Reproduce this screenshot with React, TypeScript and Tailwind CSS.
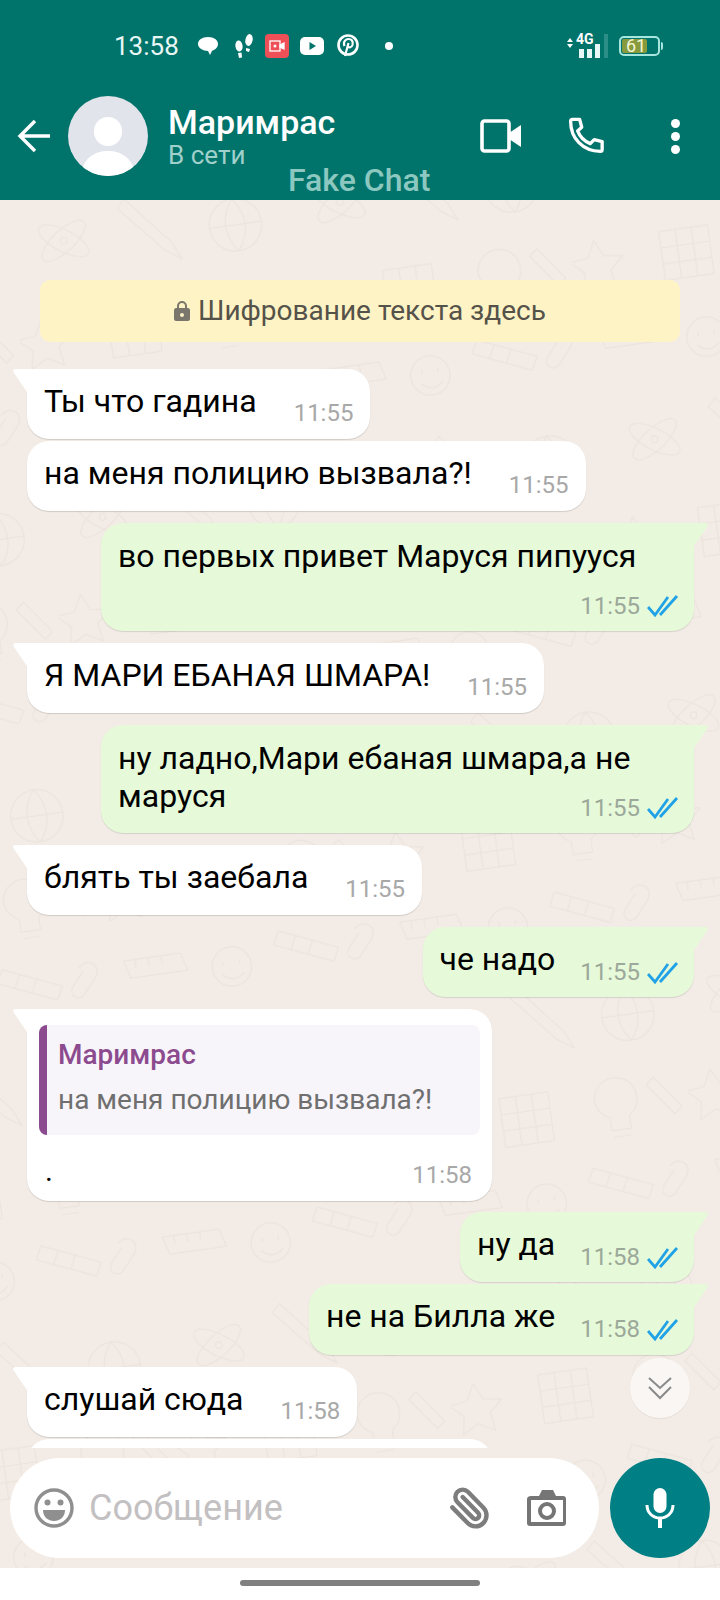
import React from "react";
import { Paperclip } from "lucide-react";

function Doodles() {
  return (
    <svg className="absolute inset-0 w-full h-full" aria-hidden="true">
      <defs>
        <pattern id="dd" x="0" y="0" width="340" height="340" patternUnits="userSpaceOnUse" patternTransform="scale(0.82) rotate(-8)">
          <g fill="none" stroke="#ebe3dc" strokeWidth="1.5" strokeLinecap="round" strokeLinejoin="round">
            <ellipse cx="70" cy="60" rx="34" ry="13" transform="rotate(35 70 60)" />
            <ellipse cx="70" cy="60" rx="34" ry="13" transform="rotate(-35 70 60)" />
            <circle cx="70" cy="60" r="4" />
            <path d="M150 20l50 60 10 22-20-14-50-58z" />
            <circle cx="280" cy="70" r="32" />
            <path d="M248 70h64M280 38c-16 20-16 44 0 64M280 38c16 20 16 44 0 64" />
            <path d="M30 150l10 20 22 3-16 15 4 22-20-11-20 11 4-22-16-15 22-3z" />
            <path d="M110 150h60v60h-60zM130 150v60M150 150v60M110 170h60M110 190h60" />
            <path d="M225 170a26 26 0 1 1 40 22v16h-24v-16a26 26 0 0 1-16-22zM243 216h20" />
            <path d="M300 150l30 40-10 8-30-40z" />
            <path d="M20 260h70l6 22H26zM34 260v10M50 260v10M66 260v10" />
            <circle cx="150" cy="285" r="24" />
            <path d="M140 278v4M160 278v4M138 294c8 8 18 8 26 0" />
            <path d="M212 250l70 30-8 16-70-30zM232 259l-8 16M252 267l-8 16" />
            <path d="M305 260c14-12 30 4 16 18l-14 16c-8 8-20-2-12-12l14-16" />
          </g>
        </pattern>
      </defs>
      <rect width="100%" height="100%" fill="url(#dd)" />
    </svg>
  );
}

function Checks() {
  return (
    <svg width="32" height="26" viewBox="0 0 32 26" fill="none" stroke="#22a2e6" strokeWidth="2.800" className="shrink-0">
      <path d="M1 14l7 8L21 4M13 22L30 3" />
    </svg>
  );
}

function InTail() {
  return (
    <svg width="16" height="26" viewBox="0 0 16 26" className="absolute -left-[14px] top-0">
      <path d="M16 0H3C0 0-.5 2 1 4L16 26z" fill="#fff" />
    </svg>
  );
}

function OutTail() {
  return (
    <svg width="16" height="26" viewBox="0 0 16 26" className="absolute -right-[14px] top-0">
      <path d="M0 0h13c3 0 3.500 2 2 4L0 26z" fill="#e6fad9" />
    </svg>
  );
}

function In({ text, time, tail, cls }: { text: string; time: string; tail?: boolean; cls: string }) {
  return (
    <div className={`relative self-start ml-[27px] h-[70px] flex gap-[37px] bg-white pl-[17px] pr-[17px] pt-[14px] text-[32px] leading-[37px] text-black rounded-[22px] shadow-[0_1px_1px_rgba(0,0,0,0.14)] ${tail ? "rounded-tl-none" : ""} ${cls}`}>
      {tail && <InTail />}
      <span className="whitespace-nowrap">{text}</span>
      <span className="mt-[12px] text-[24px] leading-[37px] text-[#a8a8a8]">{time}</span>
    </div>
  );
}

function Out({ text, time, cls }: { text: string; time: string; cls: string }) {
  return (
    <div className={`relative self-end mr-[26px] h-[70px] flex gap-[25px] bg-[#e6fad9] pl-[17px] pr-[15px] pt-[14px] text-[32px] leading-[37px] text-black rounded-[22px] rounded-tr-none shadow-[0_1px_1px_rgba(0,0,0,0.12)] ${cls}`}>
      <OutTail />
      <span className="whitespace-nowrap">{text}</span>
      <span className="mt-[13px] flex items-center gap-[7px] h-[37px] text-[24px] text-[#9ca89a]">
        {time}
        <Checks />
      </span>
    </div>
  );
}

function OutLong({ text, time, metaCls, cls }: { text: React.ReactNode; time: string; metaCls: string; cls: string }) {
  return (
    <div className={`relative self-end mr-[26px] w-[593px] h-[108px] bg-[#e6fad9] pl-[17px] pr-[15px] pt-[14px] text-[32px] leading-[38px] text-black rounded-[22px] rounded-tr-none shadow-[0_1px_1px_rgba(0,0,0,0.12)] ${cls}`}>
      <OutTail />
      <div>{text}</div>
      <div className={`flex justify-end items-center gap-[7px] h-[28px] text-[24px] text-[#9ca89a] ${metaCls}`}>
        {time}
        <Checks />
      </div>
    </div>
  );
}

function StatusBar() {
  return (
    <div className="h-[92px] flex items-center text-white">
      <span className="ml-[114px] w-[62px] text-[26px] leading-none text-[#e8f6f4]">13:58</span>
      <svg width="22" height="20" viewBox="0 0 22 20" className="ml-[21px]" fill="#fff">
        <path d="M11 1c6 0 10 3 10 7s-4 6-6 7l-2 4-2-4C6 15 1 12 1 8s4-7 10-7z" />
      </svg>
      <svg width="22" height="26" viewBox="0 0 22 26" className="ml-[14px]" fill="#fff">
        <ellipse cx="16" cy="7" rx="3.600" ry="6" transform="rotate(12 16 7)" />
        <path d="M13 15l4 1-1 3-3-1z" />
        <ellipse cx="6" cy="13" rx="3.600" ry="5.500" transform="rotate(-8 6 13)" />
        <path d="M5 20l3.500-.5.500 5-3 .5z" />
      </svg>
      <div className="ml-[10px] w-[24px] h-[24px] rounded-[4px] bg-[#ef5058] flex items-center justify-center">
        <svg width="16" height="12" viewBox="0 0 16 12" fill="none" stroke="#fff" strokeWidth="1.300">
          <rect x="1" y="1" width="10" height="10" />
          <path d="M11 5l4-2v6l-4-2z" fill="#fff" />
          <circle cx="6" cy="6" r="1.500" fill="#fff" stroke="none" />
        </svg>
      </div>
      <svg width="24" height="18" viewBox="0 0 24 18" className="ml-[11px]">
        <rect width="24" height="18" rx="5" fill="#fff" />
        <path d="M9.500 5l6.500 4-6.500 4z" fill="#00736b" />
      </svg>
      <svg width="22" height="24" viewBox="0 0 22 24" className="ml-[13px]" fill="none" stroke="#fff" strokeWidth="2.600">
        <circle cx="11" cy="11" r="9.500" />
        <path d="M8 22l3.500-13M7.500 12c-2-5 2-7 4-7 3 0 5 2 4 6-1 3-4 3-5 1" strokeWidth="2.200" />
      </svg>
      <span className="ml-[26px] w-[8px] h-[8px] rounded-full bg-white" />
      <div className="ml-[174px] -mt-[7px] w-[6px] flex flex-col gap-[2px] items-center">
        <span className="w-0 h-0 border-x-[3px] border-x-transparent border-b-[4px] border-b-white" />
        <span className="w-0 h-0 border-x-[3px] border-x-transparent border-t-[4px] border-t-white" />
      </div>
      <div className="relative ml-[3px] w-[32px] h-[24px]">
        <span className="absolute left-0 -top-[2px] text-[14px] leading-[14px] font-bold text-white">4G</span>
        <span className="absolute left-[3px] bottom-0 w-[5px] h-[9px] bg-[#e6f7f5]" />
        <span className="absolute left-[11px] bottom-0 w-[5px] h-[9px] bg-[#e6f7f5]" />
        <span className="absolute left-[19px] bottom-0 w-[5px] h-[14px] bg-[#e6f7f5]" />
      </div>
      <span className="ml-[-4px] w-[4px] h-[24px] bg-[#2c8f87]" />
      <div className="ml-[11px] relative w-[41px] h-[20px] rounded-[5px] border-2 border-[#a5e6de] p-[1px]">
        <div className="w-[25px] h-full rounded-[2px] bg-[#879a3d]" />
        <span className="absolute left-[5px] -top-[1px] text-[18px] leading-[18px] text-[#f4f6d8]">61</span>
        <span className="absolute -right-[5px] top-[4px] w-[2px] h-[8px] rounded-r bg-[#a5e6de]" />
      </div>
    </div>
  );
}

function Header() {
  return (
    <header className="relative h-[200px] bg-[#00736b] shrink-0">
      <StatusBar />
      <div className="flex items-center h-[88px]">
        <svg width="34" height="34" viewBox="0 0 34 34" fill="none" stroke="#fff" strokeWidth="3.400" className="ml-[17px]">
          <path d="M33 17H3M18 2L3 17l15 15" />
        </svg>
        <div className="relative ml-[17px] w-[80px] h-[80px] rounded-full bg-[#e1e4ea] overflow-hidden">
          <div className="absolute left-[26px] top-[21px] w-[28px] h-[29px] rounded-full bg-white" />
          <div className="absolute left-[13px] top-[55px] w-[54px] h-[50px] rounded-full bg-white" />
        </div>
        <div className="ml-[20px] w-[310px]">
          <div className="text-[34px] leading-[38px] font-medium text-white -mt-[1px]">Маримрас</div>
          <div className="text-[26px] leading-[28px] text-[#a0d0ca]">В сети</div>
        </div>
        <svg width="42" height="34" viewBox="0 0 42 34" className="ml-[2px]" fill="none">
          <rect x="2" y="2" width="27" height="30" rx="2.500" stroke="#fff" strokeWidth="3.600" />
          <path d="M29 14l12-8v22l-12-8z" fill="#fff" />
        </svg>
        <svg width="38" height="38" viewBox="0 0 24 24" className="ml-[45px]" fill="none" stroke="#fff" strokeWidth="2.100" strokeLinejoin="round">
          <path d="M3.500 1.500h4.500l1.300 5-2.600 2.300c1.300 3.300 4.300 6.600 8 8l2.500-2.500 5 1.200v5c0 .8-.5 1.200-1.200 1.200C10 21.500 2.300 13.500 2.300 2.800c0-.8.500-1.300 1.200-1.300z" />
        </svg>
        <div className="ml-[66px] flex flex-col gap-[4px]">
          <span className="w-[9px] h-[9px] rounded-full bg-white" />
          <span className="w-[9px] h-[9px] rounded-full bg-white" />
          <span className="w-[9px] h-[9px] rounded-full bg-white" />
        </div>
      </div>
      <div className="absolute left-[288px] top-[163px] text-[32px] leading-[34px] font-medium text-[#8cc8c0]">Fake Chat</div>
    </header>
  );
}

function Composer() {
  return (
    <div className="relative flex gap-[11px] pl-[10px] h-[100px] mt-[10px]">
      <div className="w-[589px] h-full rounded-full bg-white flex items-center">
        <svg width="40" height="40" viewBox="0 0 40 40" className="ml-[24px]">
          <circle cx="20" cy="20" r="18" fill="none" stroke="#8f8f8f" strokeWidth="3.400" />
          <circle cx="13.500" cy="14.500" r="3" fill="#8f8f8f" />
          <circle cx="26.500" cy="14.500" r="3" fill="#8f8f8f" />
          <path d="M9 22h22c0 7-5 11-11 11S9 29 9 22z" fill="#8f8f8f" />
        </svg>
        <span className="ml-[15px] w-[359px] text-[36px] leading-[40px] text-[#c3c0c2]">Сообщение</span>
        <Paperclip size={44} strokeWidth={2.400} color="#7d7d7d" className="-scale-x-100" />
        <svg width="40" height="38" viewBox="0 0 40 38" className="ml-[35px]">
          <path fillRule="evenodd" d="M4 7h8l3-6h11l3 6h7c2 0 3 1 3 3v24c0 2-1 3-3 3H3c-2 0-3-1-3-3V10c0-2 2-3 4-3zm0 4v22h32V11zm16 2a9 9 0 1 1 0 18 9 9 0 0 1 0-18zm0 4a5 5 0 1 0 0 10 5 5 0 0 0 0-10z" fill="#757575" />
        </svg>
      </div>
      <div className="w-[100px] h-full rounded-full bg-[#007f84] flex items-center justify-center">
        <svg width="30" height="40" viewBox="0 0 30 40" fill="none">
          <rect x="8.500" y="0" width="13" height="25" rx="6.500" fill="#fff" />
          <path d="M2 17c0 8 6 13 13 13s13-5 13-13" stroke="#fff" strokeWidth="3" />
          <path d="M15 30v10" stroke="#fff" strokeWidth="4" />
        </svg>
      </div>
    </div>
  );
}

export default function App() {
  return (
    <div className="relative w-[720px] h-[1600px] overflow-hidden flex flex-col bg-white [font-family:Roboto,sans-serif]">
      <Header />
      <main className="relative h-[1368px] bg-[#f3ece6] shrink-0">
        <Doodles />
        <div className="relative h-[1248px] overflow-hidden flex flex-col">
          <div className="mx-[40px] mt-[80px] h-[62px] shrink-0 rounded-[10px] bg-[#fef3c5] flex items-center justify-center gap-[8px] text-[28px] text-[#55524a]">
            <svg width="16" height="20" viewBox="0 0 16 20" fill="#7a766b">
              <path fillRule="evenodd" d="M3 7V5a5 5 0 0 1 10 0v2h1c1 0 2 1 2 2v9c0 1-1 2-2 2H2c-1 0-2-1-2-2V9c0-1 1-2 2-2zm2 0h6V5a3 3 0 0 0-6 0zm3 5a2 2 0 1 0 0 4 2 2 0 0 0 0-4z" />
            </svg>
            <span>Шифрование текста здесь</span>
          </div>
          <In cls="mt-[27px] shrink-0" tail text="Ты что гадина" time="11:55" />
          <In cls="mt-[2px] shrink-0" text="на меня полицию вызвала?!" time="11:55" />
          <OutLong cls="mt-[12px] shrink-0" metaCls="mt-[17px]" text="во первых привет Маруся пипууся" time="11:55" />
          <In cls="mt-[12px] shrink-0" tail text="Я МАРИ ЕБАНАЯ ШМАРА!" time="11:55" />
          <OutLong cls="mt-[12px] shrink-0" metaCls="-mt-[21px]" text={<>ну ладно,Мари ебаная шмара,а не<br />маруся</>} time="11:55" />
          <In cls="mt-[12px] shrink-0" tail text="блять ты заебала" time="11:55" />
          <Out cls="mt-[12px] shrink-0" text="че надо" time="11:55" />
          <div className="relative self-start ml-[27px] mt-[12px] w-[465px] h-[192px] shrink-0 bg-white rounded-[22px] rounded-tl-none p-[12px] pt-[16px] shadow-[0_1px_1px_rgba(0,0,0,0.14)]">
            <InTail />
            <div className="h-[110px] rounded-[8px] bg-[#f7f5f9] border-l-[8px] border-[#8c4a8f] pl-[11px] pt-[14px]">
              <div className="text-[28px] leading-[32px] font-medium text-[#8c4a8f]">Маримрас</div>
              <div className="mt-[13px] text-[28px] leading-[32px] text-[#6f6f6f]">на меня полицию вызвала?!</div>
            </div>
            <div className="flex justify-between items-center mt-[22px] pl-[6px] pr-[8px] h-[36px]">
              <span className="text-[30px] leading-[30px] text-black -mt-[8px]">.</span>
              <span className="text-[24px] text-[#a8a8a8]">11:58</span>
            </div>
          </div>
          <Out cls="mt-[11px] shrink-0" text="ну да" time="11:58" />
          <Out cls="mt-[2px] !h-[71px] shrink-0" text="не на Билла же" time="11:58" />
          <In cls="mt-[12px] shrink-0" tail text="слушай сюда" time="11:58" />
          <div className="ml-[27px] mt-[2px] w-[465px] h-[70px] shrink-0 bg-white rounded-[22px]" />
        </div>
        <Composer />
        <button className="absolute left-[630px] top-[1158px] w-[60px] h-[60px] rounded-full bg-[#f9f6f3] flex items-center justify-center shadow-[0_1px_1px_rgba(0,0,0,0.06)]">
          <svg width="26" height="24" viewBox="0 0 26 24" fill="none" stroke="#8a8a8a" strokeWidth="2">
            <path d="M2 2l11 10L24 2M2 11l11 11 11-11" />
          </svg>
        </button>
      </main>
      <div className="h-[32px] flex justify-center pt-[12px]">
        <div className="w-[240px] h-[6px] rounded-full bg-[#808080]" />
      </div>
    </div>
  );
}
